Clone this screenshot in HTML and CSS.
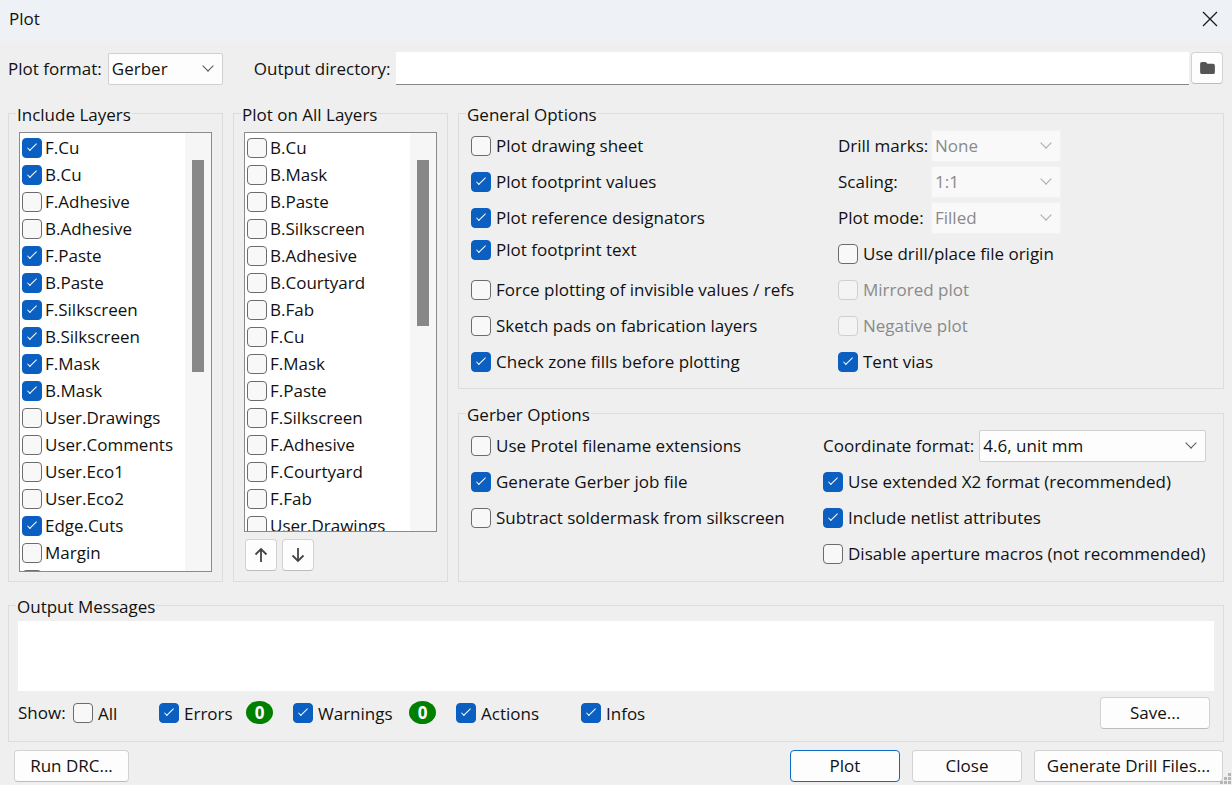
FILE: index.html
```html
<!DOCTYPE html>
<html>
    <head>
        <meta charset="utf-8">
        <title>Plot</title>
        <link rel="stylesheet" href="styles.css">
    </head>
    <body>
        <div class="titlebar">
            <span>Plot</span>
            <svg class="close-icon" width="16" height="16" viewBox="0 0 16 16"><path d="M1 1 L15 15 M15 1 L1 15" stroke="#1a1a1a" stroke-width="1.3" fill="none"/></svg>
        </div>

        <div class="toprow">
            <span>Plot format:</span>
            <div class="combo format-combo">Gerber</div>
            <span class="dir-label">Output directory:</span>
            <div class="textinput"></div>
            <div class="button folder-button">
                <svg width="15" height="12" viewBox="0 0 16 13"><path d="M0 2 Q0 0 2 0 H6 L8 2 H14 Q16 2 16 4 V11 Q16 13 14 13 H2 Q0 13 0 11 Z" fill="#555"/></svg>
            </div>
        </div>

        <div class="columns">
            <div class="group layers-group">
                <span class="group-title">Include Layers</span>
                <div class="list list-tall">
                    <div class="rows">
                        <label class="row"><i class="check on"></i>F.Cu</label>
                        <label class="row"><i class="check on"></i>B.Cu</label>
                        <label class="row"><i class="check"></i>F.Adhesive</label>
                        <label class="row"><i class="check"></i>B.Adhesive</label>
                        <label class="row"><i class="check on"></i>F.Paste</label>
                        <label class="row"><i class="check on"></i>B.Paste</label>
                        <label class="row"><i class="check on"></i>F.Silkscreen</label>
                        <label class="row"><i class="check on"></i>B.Silkscreen</label>
                        <label class="row"><i class="check on"></i>F.Mask</label>
                        <label class="row"><i class="check on"></i>B.Mask</label>
                        <label class="row"><i class="check"></i>User.Drawings</label>
                        <label class="row"><i class="check"></i>User.Comments</label>
                        <label class="row"><i class="check"></i>User.Eco1</label>
                        <label class="row"><i class="check"></i>User.Eco2</label>
                        <label class="row"><i class="check on"></i>Edge.Cuts</label>
                        <label class="row"><i class="check"></i>Margin</label>
                        <label class="row"><i class="check"></i></label>
                    </div>
                    <div class="scroll"><div class="thumb thumb-long"></div></div>
                </div>
            </div>

            <div class="group layers-group">
                <span class="group-title">Plot on All Layers</span>
                <div class="list list-short">
                    <div class="rows">
                        <label class="row"><i class="check"></i>B.Cu</label>
                        <label class="row"><i class="check"></i>B.Mask</label>
                        <label class="row"><i class="check"></i>B.Paste</label>
                        <label class="row"><i class="check"></i>B.Silkscreen</label>
                        <label class="row"><i class="check"></i>B.Adhesive</label>
                        <label class="row"><i class="check"></i>B.Courtyard</label>
                        <label class="row"><i class="check"></i>B.Fab</label>
                        <label class="row"><i class="check"></i>F.Cu</label>
                        <label class="row"><i class="check"></i>F.Mask</label>
                        <label class="row"><i class="check"></i>F.Paste</label>
                        <label class="row"><i class="check"></i>F.Silkscreen</label>
                        <label class="row"><i class="check"></i>F.Adhesive</label>
                        <label class="row"><i class="check"></i>F.Courtyard</label>
                        <label class="row"><i class="check"></i>F.Fab</label>
                        <label class="row"><i class="check"></i>User.Drawings</label>
                    </div>
                    <div class="scroll"><div class="thumb thumb-short"></div></div>
                </div>
                <div class="move-buttons">
                    <div class="button move-button">
                        <svg width="14" height="16" viewBox="0 0 14 16"><path d="M7 15 V2 M1.5 7.5 L7 2 L12.5 7.5" stroke="#444" stroke-width="1.8" fill="none"/></svg>
                    </div>
                    <div class="button move-button">
                        <svg width="14" height="16" viewBox="0 0 14 16"><path d="M7 1 V14 M1.5 8.5 L7 14 L12.5 8.5" stroke="#444" stroke-width="1.8" fill="none"/></svg>
                    </div>
                </div>
            </div>

            <div class="options-column">
                <div class="group general-group">
                    <span class="group-title">General Options</span>
                    <div class="options general-options">
                        <div class="option-col">
                            <label class="opt"><i class="check"></i>Plot drawing sheet</label>
                            <label class="opt"><i class="check on"></i>Plot footprint values</label>
                            <label class="opt"><i class="check on"></i>Plot reference designators</label>
                            <label class="opt opt-raised"><i class="check on"></i>Plot footprint text</label>
                            <label class="opt"><i class="check"></i>Force plotting of invisible values / refs</label>
                            <label class="opt"><i class="check"></i>Sketch pads on fabrication layers</label>
                            <label class="opt"><i class="check on"></i>Check zone fills before plotting</label>
                        </div>
                        <div class="option-col">
                            <div class="opt"><span class="field-label">Drill marks:</span><div class="combo combo-off">None</div></div>
                            <div class="opt"><span class="field-label">Scaling:</span><div class="combo combo-off">1:1</div></div>
                            <div class="opt"><span class="field-label">Plot mode:</span><div class="combo combo-off">Filled</div></div>
                            <label class="opt"><i class="check"></i>Use drill/place file origin</label>
                            <label class="opt opt-off"><i class="check"></i>Mirrored plot</label>
                            <label class="opt opt-off"><i class="check"></i>Negative plot</label>
                            <label class="opt"><i class="check on"></i>Tent vias</label>
                        </div>
                    </div>
                </div>

                <div class="group gerber-group">
                    <span class="group-title">Gerber Options</span>
                    <div class="options gerber-options">
                        <div class="option-col">
                            <label class="opt"><i class="check"></i>Use Protel filename extensions</label>
                            <label class="opt"><i class="check on"></i>Generate Gerber job file</label>
                            <label class="opt"><i class="check"></i>Subtract soldermask from silkscreen</label>
                        </div>
                        <div class="option-col">
                            <div class="opt"><span class="coord-label">Coordinate format:</span><div class="combo coord-combo">4.6, unit mm</div></div>
                            <label class="opt"><i class="check on"></i>Use extended X2 format (recommended)</label>
                            <label class="opt"><i class="check on"></i>Include netlist attributes</label>
                            <label class="opt"><i class="check"></i>Disable aperture macros (not recommended)</label>
                        </div>
                    </div>
                </div>
            </div>
        </div>

        <div class="group messages-group">
            <span class="group-title">Output Messages</span>
            <div class="messages"></div>
            <div class="show-row">
                <span class="show-label">Show:</span>
                <label class="opt show-all"><i class="check"></i>All</label>
                <label class="opt show-errors"><i class="check on"></i>Errors</label>
                <span class="badge">0</span>
                <label class="opt show-warnings"><i class="check on"></i>Warnings</label>
                <span class="badge">0</span>
                <label class="opt show-actions"><i class="check on"></i>Actions</label>
                <label class="opt"><i class="check on"></i>Infos</label>
                <div class="button save-button">Save...</div>
            </div>
        </div>

        <div class="bottom-row">
            <div class="button drc-button">Run DRC...</div>
            <div class="button action-button default-button">Plot</div>
            <div class="button action-button">Close</div>
            <div class="button drill-button">Generate Drill Files...</div>
        </div>

        <svg class="grip" width="12" height="12" viewBox="0 0 12 12"><path d="M8 0h3v3H8z M4 4h3v3H4z M8 4h3v3H8z M0 8h3v3H0z M4 8h3v3H4z M8 8h3v3H8z" fill="#b5b5b5"/></svg>
    </body>
</html>
```

FILE: styles.css
```css
html {
    height: 100%;
}
body {
    margin: 0;
    width: 1232px;
    height: 785px;
    overflow: hidden;
    position: relative;
    background-color: #efefef;
    color: #111;
    font-family: "Open Sans", "Noto Sans", sans-serif;
    font-size: 17px;
    line-height: 24px;
}

/* title bar */
.titlebar {
    height: 41px;
    box-sizing: border-box;
    padding: 0 14px 4px 9px;
    background-color: #eef2f7;
    display: flex;
    align-items: center;
    justify-content: space-between;
}

/* format / directory row */
.toprow {
    height: 33px;
    margin: 11px 9px 0 8px;
    display: flex;
    align-items: center;
}
.dir-label {
    margin: 0 6px 0 31px;
}
.textinput {
    flex: 1;
    height: 33px;
    box-sizing: border-box;
    background-color: #fff;
    border-bottom: 1px solid #868686;
}
.folder-button {
    width: 32px;
    height: 32px;
    margin: -1px 0 0 2px;
}

/* controls */
.combo {
    height: 32px;
    box-sizing: border-box;
    padding-left: 3px;
    display: flex;
    align-items: center;
    position: relative;
    background-color: #fdfdfd;
    border: 1px solid #d0d0d0;
    border-radius: 2px;
}
.combo::after {
    content: "";
    position: absolute;
    right: 10px;
    top: 8px;
    width: 7px;
    height: 7px;
    border-right: 1px solid #555;
    border-bottom: 1px solid #555;
    transform: rotate(45deg);
}
.format-combo {
    width: 115px;
    margin-left: 6px;
}
.combo-off {
    width: 130px;
    margin-top: -1px;
    padding-top: 1px;
    color: #8a8a8a;
    background-color: #f9f9f9;
    border-color: #f2f2f2;
}
.combo-off::after {
    border-color: #aaa;
}
.coord-combo {
    width: 227px;
    margin-left: 5px;
}
.button {
    box-sizing: border-box;
    display: flex;
    align-items: center;
    justify-content: center;
    background-color: #fdfdfd;
    border: 1px solid #d2d2d2;
    border-bottom-color: #bcbcbc;
    border-radius: 4px;
}
.check {
    flex: none;
    width: 20px;
    height: 20px;
    box-sizing: border-box;
    margin-right: 5px;
    position: relative;
    background-color: #f8f8f8;
    border: 1px solid #6c6c6c;
    border-radius: 4px;
}
.check.on {
    background-color: #0a5fc0;
    border-color: #0a5fc0;
}
.check.on::after {
    content: "";
    position: absolute;
    left: 4px;
    top: 5px;
    width: 9px;
    height: 3px;
    border-left: 1px solid #fff;
    border-bottom: 1px solid #fff;
    transform: rotate(-45deg);
}

/* groups */
.columns {
    height: 469px;
    margin: 28px 8px 0;
    display: grid;
    grid-template-columns: 215px 215px 766px;
    column-gap: 10px;
}
.group {
    box-sizing: border-box;
    border: 1px solid #dcdcdc;
}
.group-title {
    display: block;
    width: fit-content;
    height: 24px;
    margin: -11px 0 0 7px;
    padding: 0 1px;
    background-color: #efefef;
}
.options-column {
    display: flex;
    flex-direction: column;
    gap: 24px;
}

/* layer lists */
.list {
    width: 193px;
    box-sizing: border-box;
    margin: 5px 0 0 10px;
    display: flex;
    background-color: #fff;
    border: 1px solid #8b8b8b;
}
.list-tall {
    height: 440px;
}
.list-short {
    height: 400px;
}
.rows {
    flex: 1;
    overflow: hidden;
    padding: 1px 0 0 2px;
}
.row {
    height: 27px;
    display: flex;
    align-items: center;
}
.row .check {
    margin-right: 3px;
}
.scroll {
    width: 26px;
    box-sizing: border-box;
    padding: 27px 7px 0;
    background-color: #f6f6f6;
}
.thumb {
    background-color: #888;
}
.thumb-long {
    height: 212px;
}
.thumb-short {
    height: 166px;
}
.move-buttons {
    margin: 7px 0 0 11px;
    display: flex;
    gap: 5px;
}
.move-button {
    width: 32px;
    height: 32px;
}

/* option columns */
.options {
    display: flex;
    margin: 1px 0 0 12px;
}
.general-options {
    gap: 41px;
}
.general-options .option-col:first-child {
    width: 326px;
}
.gerber-options .option-col:first-child {
    width: 352px;
}
.general-group {
    height: 276px;
}
.gerber-group {
    height: 169px;
}
.opt {
    height: 36px;
    display: flex;
    align-items: center;
}
.opt-raised {
    margin: -4px 0 4px;
}
.opt-off {
    color: #8a8a8a;
}
.opt-off .check {
    background-color: #f4f4f4;
    border-color: #d0d0d0;
}
.field-label {
    width: 93px;
}

/* output messages */
.messages-group {
    height: 137px;
    margin: 23px 8px 0;
}
.messages {
    height: 70px;
    margin: 2px 9px 0;
    background-color: #fff;
}
.show-row {
    height: 32px;
    margin: 6px 13px 0 9px;
    display: flex;
    align-items: center;
}
.show-row .opt {
    box-sizing: border-box;
    padding-top: 2px;
}
.show-row .check {
    margin-top: -3px;
}
.show-label {
    width: 55px;
}
.show-all {
    width: 86px;
}
.show-errors {
    width: 87px;
}
.show-warnings {
    width: 116px;
}
.show-actions {
    width: 125px;
}
.badge {
    width: 27px;
    height: 23px;
    margin: -1px 20px 0 0;
    border-radius: 50%;
    background-color: #008000;
    color: #fff;
    font-weight: 700;
    text-align: center;
    line-height: 23px;
}
.save-button {
    width: 110px;
    height: 32px;
    margin-left: auto;
}

/* bottom buttons */
.bottom-row {
    height: 32px;
    margin: 8px 9px 0 14px;
    display: flex;
    gap: 12px;
}
.drc-button {
    width: 115px;
    margin-right: auto;
}
.action-button {
    width: 110px;
}
.default-button {
    border: 1px solid #0a6cc4;
}
.drill-button {
    width: 189px;
}
.grip {
    position: absolute;
    right: 0;
    bottom: 0;
}
```
